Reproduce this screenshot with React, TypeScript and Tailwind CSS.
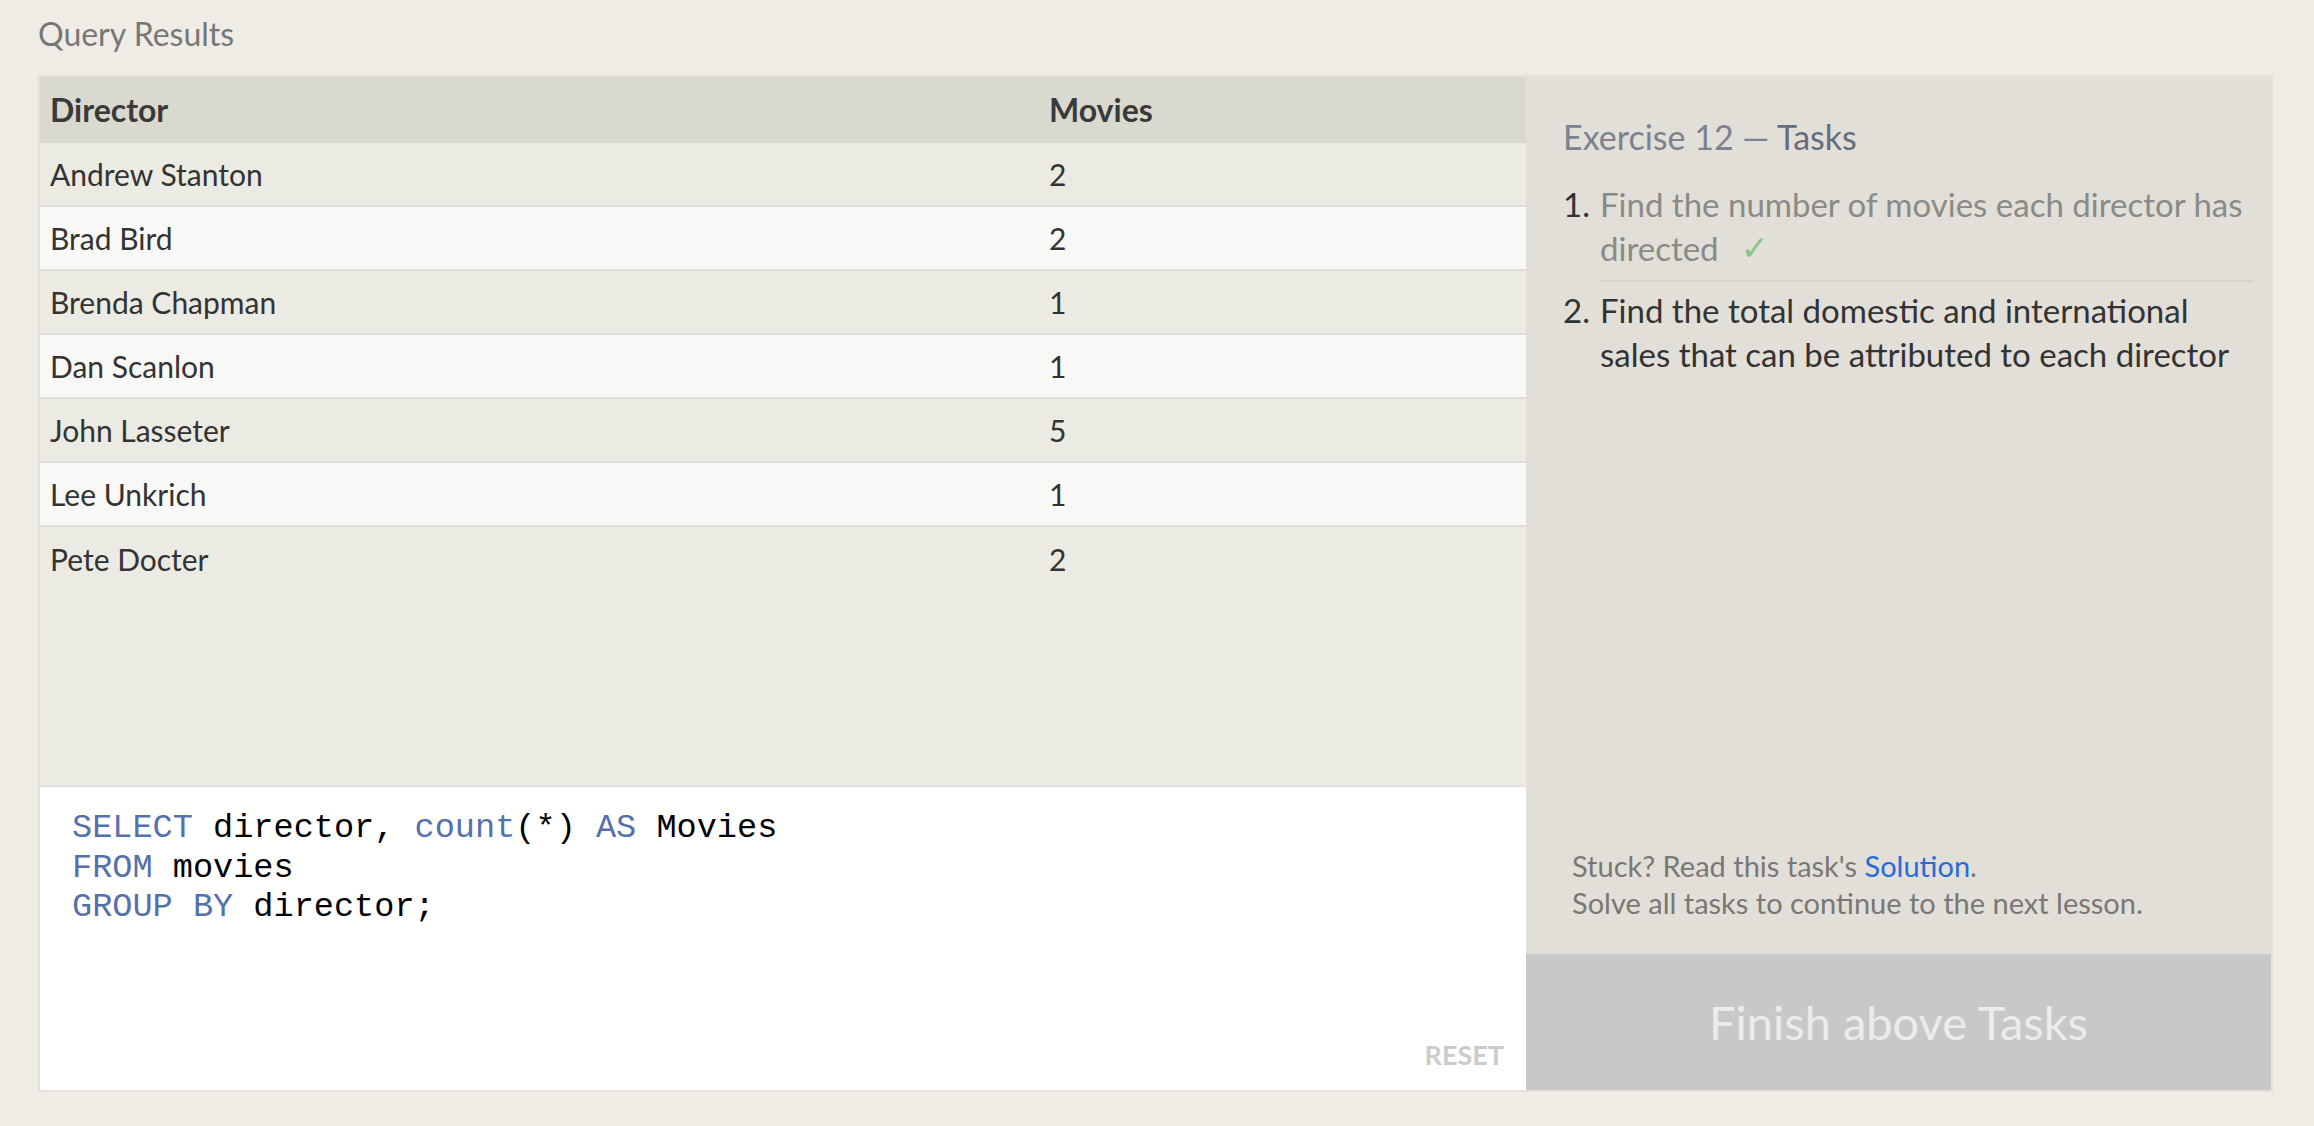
import React from 'react';

interface Row {
  director: string;
  movies: number;
}

const rows: Row[] = [
  { director: 'Andrew Stanton', movies: 2 },
  { director: 'Brad Bird', movies: 2 },
  { director: 'Brenda Chapman', movies: 1 },
  { director: 'Dan Scanlon', movies: 1 },
  { director: 'John Lasseter', movies: 5 },
  { director: 'Lee Unkrich', movies: 1 },
  { director: 'Pete Docter', movies: 2 },
];

const Kw: React.FC<{ children: React.ReactNode }> = ({ children }) => (
  <span className="text-[#5670ad]">{children}</span>
);

const App: React.FC = () => {
  return (
    <div className="min-h-screen bg-[#efece5] pl-[38px] pr-[41px] pt-[15px] pb-[34px] font-['Lato','Open_Sans',sans-serif]">
      <h2 className="text-[32px] leading-[38px] text-[#777] mb-[22px]">Query Results</h2>

      <div className="flex border-2 border-[#e3e1da]">
        {/* results + editor */}
        <div className="w-[1486px] flex flex-col">
          <div className="h-[708px] bg-[#ebeae3] text-[30px] text-[#333]">
            <div className="h-[66px] flex items-center bg-[#dad9d0] font-bold text-[32px] text-[#3a3a3a]">
              <div className="w-[1009px] pl-[10px]">Director</div>
              <div>Movies</div>
            </div>
            {rows.map((row, i) => (
              <div
                key={row.director}
                className={`h-[64px] flex items-center ${i < rows.length - 1 ? 'border-b-2 border-[#dfded7]' : ''} ${i % 2 === 0 ? 'bg-[#ebeae3]' : 'bg-[#f8f8f7]'}`}
              >
                <div className="w-[1009px] pl-[10px]">{row.director}</div>
                <div>{row.movies}</div>
              </div>
            ))}
          </div>
          <div className="h-[305px] border-t-2 border-[#e3e2dc] bg-white flex flex-col justify-between pt-[22px] pl-[32px] pr-[22px] pb-[20px]">
            <pre className="font-['Liberation_Mono',monospace] text-[33.6px] leading-[39.5px] text-black">
              <Kw>SELECT</Kw> director, <Kw>count</Kw>(*) <Kw>AS</Kw> Movies{'\n'}
              <Kw>FROM</Kw> movies{'\n'}
              <Kw>GROUP BY</Kw> director;
            </pre>
            <div className="self-end text-[27px] leading-[30px] font-bold text-[#cbcbcb]">RESET</div>
          </div>
        </div>

        {/* tasks panel */}
        <div className="flex-1 flex flex-col bg-[#e2dfd8]">
          <div className="pt-[40px] pl-[37px] pr-[17px]">
            <h3 className="text-[34px] leading-[40px] text-[#7d8291]">
              Exercise 12 — <span className="text-[#666c7e]">Tasks</span>
            </h3>
            <ol className="mt-[25px] text-[33px] leading-[44px]">
              <li className="flex">
                <span className="w-[37px] shrink-0 text-[#333]">1.</span>
                <div className="flex-1 pb-[10px] border-b-2 border-[#d6d3ca] text-[#8a8a86]">
                  Find the number of movies each director has directed
                  <span className="inline-block ml-[22px] align-top text-[#88c788] font-['DejaVu_Sans',sans-serif] text-[34px] leading-[44px]">✓</span>
                </div>
              </li>
              <li className="flex pt-[6px]">
                <span className="w-[37px] shrink-0 text-[#333]">2.</span>
                <div className="flex-1 text-[#333]">
                  Find the total domestic and international sales that can be attributed to each director
                </div>
              </li>
            </ol>
          </div>

          <div className="flex-1" />

          <div className="pl-[46px] pb-[33px] text-[29px] leading-[37px] text-[#7a7875]">
            <p>
              Stuck? Read this task's <a className="text-[#2a6ad8]">Solution</a>.
            </p>
            <p>Solve all tasks to continue to the next lesson.</p>
          </div>

          <button className="h-[136px] w-full bg-[#c8c8c8] text-[47px] text-[#ececec]">
            Finish above Tasks
          </button>
        </div>
      </div>
    </div>
  );
};

export default App;
